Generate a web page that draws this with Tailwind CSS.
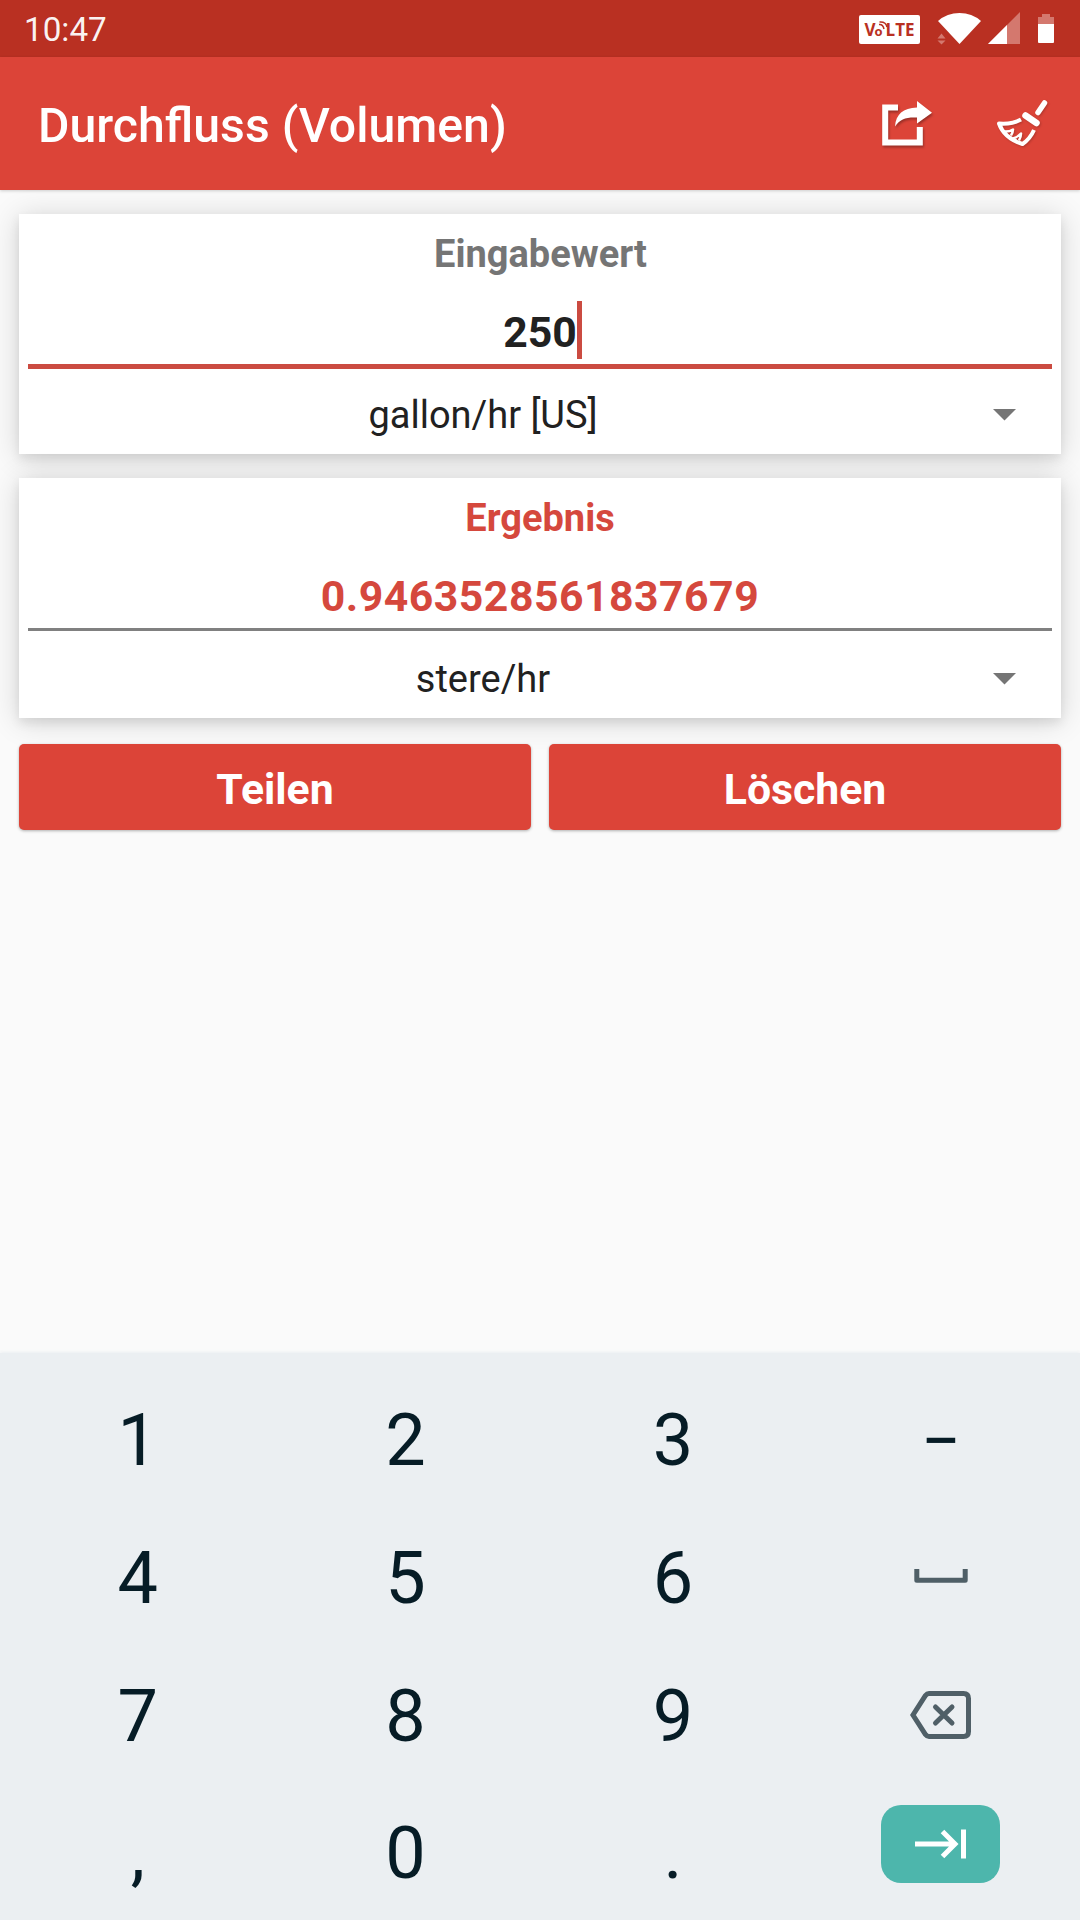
<!DOCTYPE html>
<html lang="de">
<head>
  <meta charset="UTF-8" />
  <meta name="viewport" content="width=device-width, initial-scale=1.0"/>
  <title>Durchfluss (Volumen)</title>
  <script src="https://cdn.jsdelivr.net/npm/@tailwindcss/browser@4"></script>
</head>
<body class="bg-[#fafafa] font-['Roboto',sans-serif] w-[1080px] h-[1920px] overflow-hidden flex flex-col">

  <!-- Statusleiste -->
  <div class="h-[57px] shrink-0 bg-[#b93022] flex items-start justify-between pl-[24px] pr-[26px]">
    <span class="text-white/95 text-[33.25px] leading-[59px]">10:47</span>
    <div class="flex items-start pt-[12px]">
      <div class="mt-[3px] w-[61px] h-[29px] rounded-[2px] bg-white text-[#b93022] font-bold font-['Open_Sans',sans-serif] flex items-center justify-center">
        <span class="text-[17px] leading-[29px]">V</span>
        <span class="relative text-[13px] leading-[29px] pt-[3px] mr-[3px] -ml-px">o
          <svg class="absolute left-[3px] top-[7px] w-[10px] h-[9px]" viewBox="0 0 10 9" fill="none" stroke="#b93022" stroke-width="1.5"><path d="M1 3.500Q5 3 6 8M1.500 1Q8 .5 9 6"/></svg>
        </span>
        <span class="text-[17px] leading-[29px]">LTE</span>
      </div>
      <svg class="ml-[16px] w-[47px] h-[33px]" viewBox="936 12 47 33">
        <path d="M937.500 38.500h8l-4-5zM937.500 40.500h8l-4 4z" fill="#d4786e"/>
        <path d="M959.500 44L938 21Q947 13 959.500 13T981 21z" fill="#fff"/>
      </svg>
      <svg class="ml-[4px] w-[33px] h-[33px]" viewBox="986 12 33 33">
        <path d="M1019 12v32h-32z" fill="#d4786e"/>
        <path d="M1006 25v19h-19z" fill="#fff"/>
      </svg>
      <svg class="ml-[17px] w-[17px] h-[33px]" viewBox="1037 12 17 33">
        <path d="M1042 14h8v3h4v8h-16v-8h4z" fill="#d4786e"/>
        <path d="M1038 24h16v18q0 1-1 1h-14q-1 0-1-1z" fill="#fff"/>
      </svg>
    </div>
  </div>

  <!-- App-Leiste -->
  <header class="relative z-10 h-[133px] shrink-0 bg-[#dc4438] shadow-[0_1px_3px_rgba(0,0,0,0.18)] flex items-center pl-[38px] pr-[28px]">
    <h1 class="flex-1 text-white text-[48.2px] font-medium leading-[56px] pt-[4px]">Durchfluss (Volumen)</h1>
    <button class="mr-[60px]">
      <svg class="block w-[56px] h-[50px] drop-shadow-[1px_2px_1px_rgba(0,0,0,0.3)]" viewBox="880 98 56 50">
        <path d="M898 106.500H885.200V141.500H919.800V126" fill="none" stroke="#fff" stroke-width="6"/>
        <path d="M895 125.500C896 113 903 107 917 106.500V100L932 111.700L917 122.500V116.500C906 116 900 118 895 125.500Z" fill="#fff"/>
      </svg>
    </button>
    <button>
      <svg class="block w-[56px] h-[50px] drop-shadow-[1px_1px_1px_rgba(0,0,0,0.2)]" viewBox="996 98 56 50" fill="none" stroke="#fff" stroke-linejoin="round">
        <path d="M1038 111.500L1044.500 102" stroke-width="5.500" stroke-linecap="round"/>
        <path d="M1025.500 114.500L1036.500 122" stroke-width="6.500" stroke-linecap="round"/>
        <path d="M1021 118.500Q1012 123.500 999 122.500Q1004 137 1022.500 143Q1030 138 1034 129" stroke-width="4"/>
        <path d="M1004 130.500Q1009 131 1013 128.500Q1013 131 1011 134.500M1013 137.500Q1018 136 1021 132.500Q1021 136 1019 139.500" stroke-width="2.500"/>
      </svg>
    </button>
  </header>

  <main class="flex-1 px-[19px] pt-[24px]">
    <!-- Eingabe -->
    <section class="h-[240px] bg-white shadow-[0_5px_10px_rgba(0,0,0,0.08),0_3px_28px_rgba(0,0,0,0.16)]">
      <h2 class="h-[80px] leading-[81px] text-center text-[38px] font-bold text-[#757575] pl-px">Eingabewert</h2>
      <div class="mx-[9px] h-[75px] border-b-[5px] border-[#cb4b41] flex justify-center">
        <span class="relative text-[42.75px] font-bold text-[#212121] leading-[77px]">250<i class="absolute left-full top-[7px] w-[5px] h-[58px] bg-[#cb4b41]"></i></span>
      </div>
      <div class="h-[85px] flex items-start pr-[45px]">
        <span class="flex-1 pl-[2px] text-center text-[38px] text-[#212121] leading-[92px]">gallon/hr [US]</span>
        <svg class="mt-[40px] ml-[48px] w-[23px] h-[12px]" viewBox="0 0 23 12"><path d="M0 0h23L11.500 11.500z" fill="#757575"/></svg>
      </div>
    </section>

    <!-- Ergebnis -->
    <section class="mt-[24px] h-[240px] bg-white shadow-[0_5px_10px_rgba(0,0,0,0.08),0_3px_28px_rgba(0,0,0,0.16)]">
      <h2 class="h-[80px] leading-[81px] text-center text-[38px] font-bold text-[#d5483d]">Ergebnis</h2>
      <div class="mx-[9px] mb-[2px] h-[73px] border-b-[3px] border-[#808080] text-center text-[42.75px] font-bold text-[#d5483d] leading-[77px] tracking-[0.5px]">0.9463528561837679</div>
      <div class="h-[85px] flex items-start pr-[45px]">
        <span class="flex-1 pl-[2px] text-center text-[38px] text-[#212121] leading-[92px]">stere/hr</span>
        <svg class="mt-[40px] ml-[48px] w-[23px] h-[12px]" viewBox="0 0 23 12"><path d="M0 0h23L11.500 11.500z" fill="#757575"/></svg>
      </div>
    </section>

    <div class="relative mt-[26px] grid grid-cols-2 gap-[18px] text-white text-[42.75px] font-bold">
      <button class="h-[86px] pt-[4px] rounded-[5px] bg-[#dc4438] shadow-[0_1px_3px_rgba(0,0,0,0.3)]">Teilen</button>
      <button class="h-[86px] pt-[4px] rounded-[5px] bg-[#dc4438] shadow-[0_1px_3px_rgba(0,0,0,0.3)]">Löschen</button>
    </div>
  </main>

  <!-- Zifferntastatur -->
  <div class="h-[567px] shrink-0 overflow-hidden bg-[#ebeff2] shadow-[0_-1px_3px_rgba(235,239,242,1)] pl-[4px] pr-[5.5px] pt-[19px] grid grid-cols-4 auto-rows-[137.7px] place-items-center text-[72px] leading-[139px] text-[#061c26]">
    <span>1</span>
    <span>2</span>
    <span>3</span>
    <span class="text-[70px] leading-[132px]">−</span>

    <span>4</span>
    <span>5</span>
    <span>6</span>
    <svg class="mb-[6px] w-[54px] h-[14px]" viewBox="0 0 54 14" fill="none" stroke="#4f5f67" stroke-width="5" stroke-linejoin="round"><path d="M2.800 0V11.300H51.200V0"/></svg>

    <span>7</span>
    <span>8</span>
    <span>9</span>
    <svg class="mb-[2px] w-[62px] h-[48px]" viewBox="0 0 62 48" fill="none" stroke="#4f5f67" stroke-width="5">
      <path d="M19 2.500H53.500Q58.500 2.500 58.500 7.500V40.500Q58.500 45.500 53.500 45.500H19Q17 45.500 15.500 43.500L3 24L15.500 4.500Q17 2.500 19 2.500Z"/>
      <path d="M25.500 16L42 32M42 16L25.500 32" stroke-linecap="round"/>
    </svg>

    <span>,</span>
    <span>0</span>
    <span>.</span>
    <button class="mb-[20px] w-[119px] h-[78px] rounded-[20px] bg-[#4db6ac]">
      <svg class="block w-[119px] h-[78px]" viewBox="0 0 119 78" fill="none" stroke="#fff" stroke-width="5"><path d="M34 39H73M61.500 26.500L74 39L61.500 51.500M82.500 24.500V53.500"/></svg>
    </button>
  </div>

</body>
</html>
